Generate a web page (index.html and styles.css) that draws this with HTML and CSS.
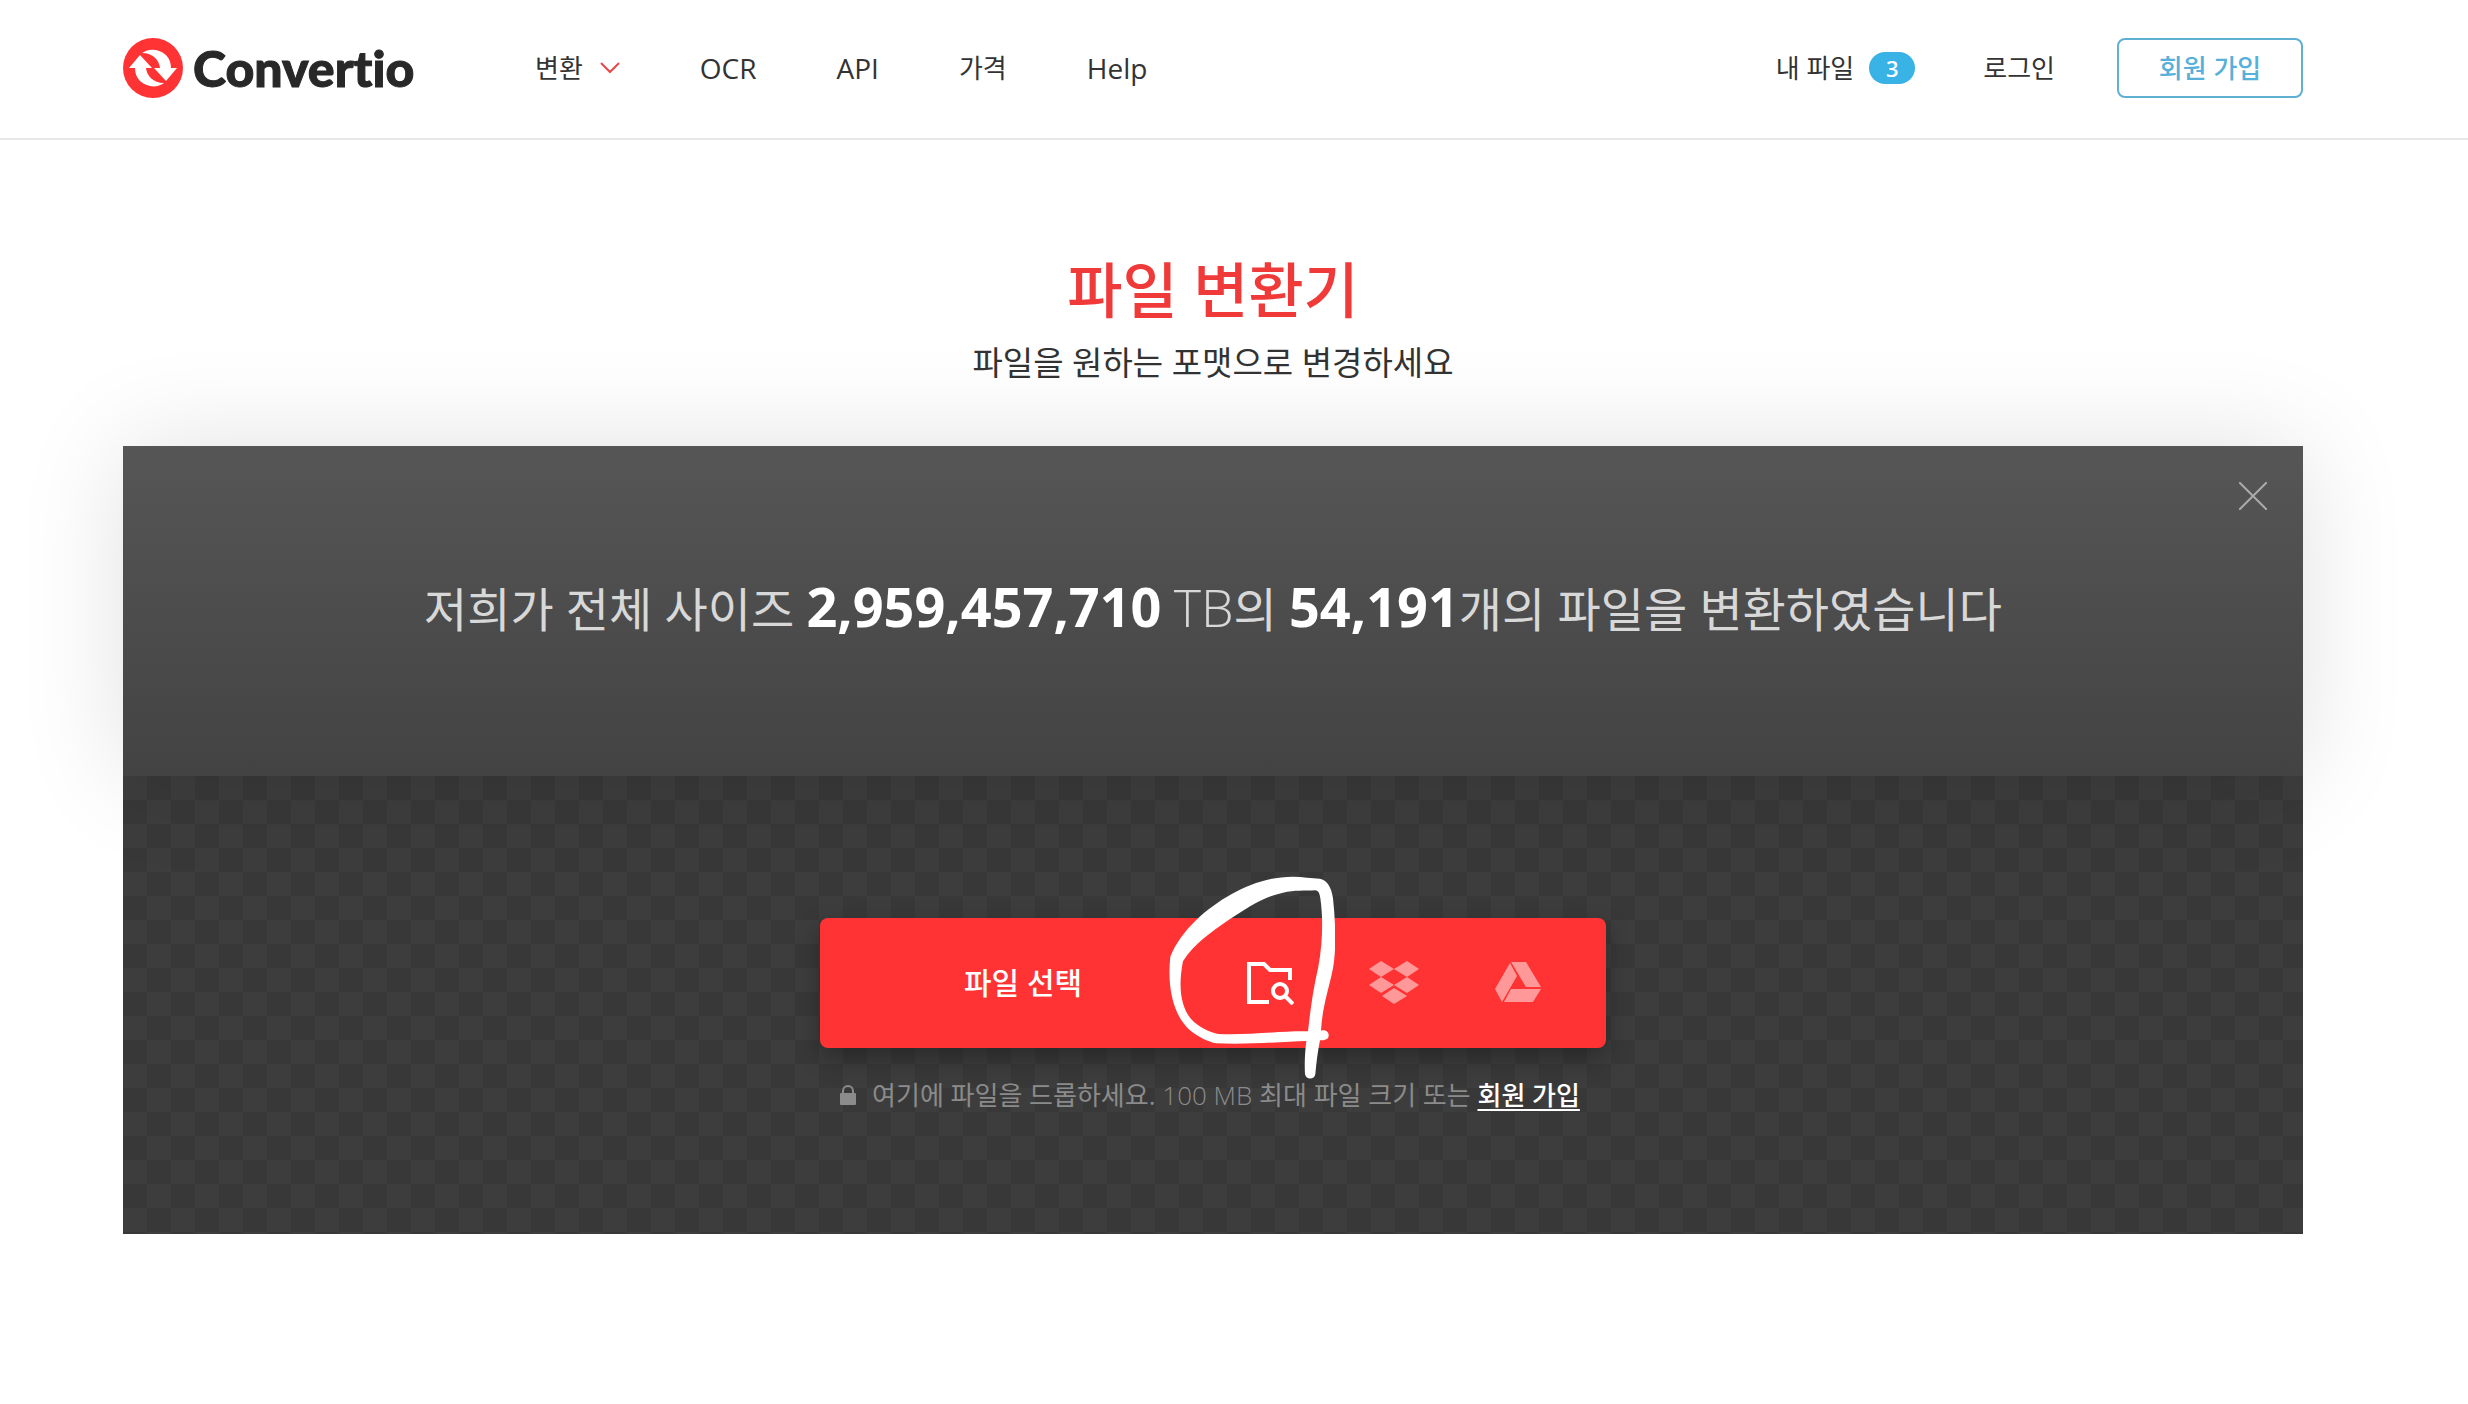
FILE: index.html
```html
<!DOCTYPE html>
<html lang="ko">

<head>
	<meta charset="UTF-8">
	<meta name="viewport" content="width=device-width, initial-scale=1">
	<title>Convertio — 파일 변환기</title>
	<link rel="stylesheet" href="styles.css">
</head>

<body>
	<header class="header">
		<a class="logo" href="#">
			<svg class="logo-icon" viewBox="0 0 60 60" aria-hidden="true">
				<circle cx="30" cy="30" r="30" fill="#ff3333" />
				<path id="arrow" fill="#fff" d="M17 17 L29 30 H23 C24 38 30 45 41 45 C37 48 32 49 27 48 C18 46 12 40 12 30 H6 Z" />
				<use href="#arrow" transform="rotate(180 30 30)" />
			</svg>
			<span class="logo-text">Convertio</span>
		</a>
		<nav class="nav">
			<a class="nav-convert" href="#">변환
				<svg class="chevron" viewBox="0 0 20 12" aria-hidden="true">
					<path d="M1 1 L10 10 L19 1" fill="none" stroke="#e8474a" stroke-width="2" />
				</svg>
			</a>
			<a class="latin" href="#">OCR</a>
			<a class="latin" href="#">API</a>
			<a href="#">가격</a>
			<a class="latin" href="#">Help</a>
		</nav>
		<div class="account">
			<a class="my-files" href="#">내 파일 <span class="badge">3</span></a>
			<a class="login" href="#">로그인</a>
			<a class="signup" href="#">회원 가입</a>
		</div>
	</header>

	<main class="main">
		<div class="heading">
			<h1>파일 변환기</h1>
			<p>파일을 원하는 포맷으로 변경하세요</p>
		</div>

		<section class="stats">
			<p>저희가 전체 사이즈 <strong>2,959,457,710</strong> <span class="unit">TB</span>의 <strong>54,191</strong>개의 파일을 변환하였습니다</p>
			<button class="close" type="button" aria-label="닫기">
				<svg viewBox="0 0 28 28" aria-hidden="true">
					<path d="M0 0 L28 28 M28 0 L0 28" stroke="#aaa" stroke-width="2" />
				</svg>
			</button>
		</section>

		<section class="upload">
			<div class="picker">
				<button class="choose" type="button">파일 선택</button>
				<button class="source active" type="button" aria-label="컴퓨터">
					<svg viewBox="0 0 48 44" aria-hidden="true">
						<path d="M23 41 H3 V3 H18 L24 9 H44 V19" fill="none" stroke="#fff" stroke-width="4" />
						<circle cx="34" cy="30" r="7" fill="none" stroke="#fff" stroke-width="4" />
						<path d="M39 35 L47 43" stroke="#fff" stroke-width="4" />
					</svg>
				</button>
				<button class="source" type="button" aria-label="Dropbox">
					<svg viewBox="0 0 50 44" aria-hidden="true">
						<path fill="#ff9999" d="M12 0 L25 8 L12 16 L0 8 Z M38 0 L50 8 L38 16 L25 8 Z M12 16 L25 24 L12 32 L0 24 Z M38 16 L50 24 L38 32 L25 24 Z M25 27 L38 35 L25 43 L13 35 Z" />
					</svg>
				</button>
				<button class="source" type="button" aria-label="Google Drive">
					<svg viewBox="0 0 48 44" aria-hidden="true">
						<path fill="#ff9999" d="M16 2 L23 15 L8 41 L1 28 Z M17 1 H32 L47 26 H32 Z M17 28 H47 L39 41 H10 Z" />
					</svg>
				</button>
				<svg class="scribble" viewBox="88 48 498 612" aria-hidden="true">
					<path fill="#fff" d="M92 290 C125 210 200 145 275 103 C330 72 390 50 460 50 C490 50 515 55 540 56 C562 60 575 80 580 115 C588 190 590 270 580 325 C567 390 548 440 544 512 C560 508 568 518 567 527 C566 537 558 541 541 541 C534 575 530 610 527 642 C525 660 499 660 496 643 C494 610 496 575 500 543 C430 545 330 554 230 550 C205 546 175 530 150 510 C100 465 82 380 92 290 Z M130 304 C115 380 123 440 155 478 C175 500 205 515 235 522 C330 526 430 512 505 514 C512 450 520 390 536 320 C550 245 550 170 542 115 C540 100 536 92 527 91 C495 93 465 90 430 98 C370 110 320 145 270 178 C215 215 160 255 130 304 Z" />
				</svg>
			</div>
			<p class="hint">
				<svg class="lock" viewBox="0 0 16 20" aria-hidden="true">
					<rect y="8" width="16" height="12" rx="1" fill="#8b8b8b" />
					<path d="M3 9 V6 A5 5 0 0 1 13 6 V9" fill="none" stroke="#8b8b8b" stroke-width="2" />
				</svg>
				<span>여기에 파일을 드롭하세요. <span class="size">100 MB</span> 최대 파일 크기 또는 <a href="#">회원 가입</a></span>
			</p>
		</section>
	</main>
</body>

</html>
```

FILE: styles.css
```css
* {
	box-sizing: border-box;
}

body,
h1,
p {
	margin: 0;
}

body {
	background: #fff;
	color: #333;
	font: 26px/36px "Open Sans", "Noto Sans CJK KR", sans-serif;
}

a {
	color: inherit;
	text-decoration: none;
}

button {
	padding: 0;
	border: 0;
	background: none;
	font: inherit;
	cursor: pointer;
}

svg {
	display: block;
}

/* header */
.header {
	display: flex;
	align-items: center;
	height: 140px;
	padding: 0 165px 2px 123px;
	border-bottom: 2px solid #e8e8e8;
}

.logo {
	display: flex;
	align-items: center;
	gap: 10px;
	width: 412px;
}

.logo-icon {
	width: 60px;
	height: 60px;
}

.logo-text {
	color: #282828;
	font: 900 50px/60px Lato, sans-serif;
	font-variant-ligatures: none;
	-webkit-text-stroke: 1px #282828;
}

.nav {
	display: flex;
	align-items: center;
	gap: 80px;
}

.latin {
	font-size: 28px;
}

.nav-convert {
	display: flex;
	align-items: center;
	gap: 17px;
}

.chevron {
	width: 20px;
	height: 12px;
}

.account {
	display: flex;
	align-items: center;
	margin-left: auto;
}

.my-files {
	display: flex;
	align-items: center;
	gap: 15px;
	margin-right: 68px;
}

.badge {
	width: 46px;
	border-radius: 16px;
	background: #39b2e5;
	color: #fff;
	font-size: 22px;
	font-weight: 600;
	line-height: 32px;
	text-align: center;
}

.login {
	margin-right: 62px;
}

.signup {
	width: 186px;
	border: 2px solid #60b0d4;
	border-radius: 8px;
	color: #56b0da;
	font-weight: 500;
	line-height: 56px;
	text-align: center;
}

/* main */
.main {
	padding: 108px 165px 170px 123px;
}

.heading {
	padding-bottom: 58px;
	text-align: center;
}

.heading h1 {
	margin-bottom: 6px;
	color: #f03a3a;
	font-size: 60px;
	font-weight: 500;
	line-height: 84px;
}

.heading p {
	font-size: 33px;
	line-height: 50px;
}

.stats {
	position: relative;
	z-index: 1;
	display: flex;
	align-items: center;
	justify-content: center;
	min-height: 330px;
	padding-bottom: 8px;
	background: linear-gradient(#565656, #434343);
	box-shadow: 0 0 100px rgba(0, 0, 0, 0.12);
	color: #d8d8d8;
	font-size: 47px;
	line-height: 64px;
	text-align: center;
}

.stats strong {
	color: #fff;
	font-size: 54px;
	font-weight: 700;
}

.stats .unit {
	font-size: 52px;
	font-weight: 300;
}

.close {
	position: absolute;
	top: 36px;
	right: 36px;
}

.close svg {
	width: 28px;
	height: 28px;
}

.upload {
	min-height: 458px;
	padding-top: 142px;
	background: repeating-conic-gradient(#383838 0 25%, #3d3d3d 0 50%) 0 0 / 48px 48px;
}

.picker {
	position: relative;
	z-index: 2;
	display: flex;
	width: 786px;
	height: 130px;
	margin: 0 auto;
	padding: 0 26px 0 18px;
	border-radius: 8px;
	background: #ff3333;
	box-shadow: 0 10px 24px rgba(0, 0, 0, 0.3);
}

.choose {
	flex: 1;
	color: #fff;
	font-size: 30px;
	font-weight: 500;
}

.source {
	display: flex;
	align-items: center;
	justify-content: center;
	width: 124px;
}

.source svg {
	height: 44px;
}

.scribble {
	position: absolute;
	top: -42px;
	left: 349px;
	width: 166px;
	height: 204px;
	pointer-events: none;
}

.hint {
	display: flex;
	align-items: center;
	justify-content: center;
	gap: 16px;
	margin-top: 29px;
	padding-right: 6px;
	color: #8b8b8b;
}

.hint .size {
	font-weight: 300;
}

.lock {
	width: 16px;
	height: 20px;
}

.hint a {
	color: #fff;
	font-weight: 500;
	text-decoration: underline;
	text-decoration-thickness: 2px;
	text-underline-offset: 4px;
}
```
